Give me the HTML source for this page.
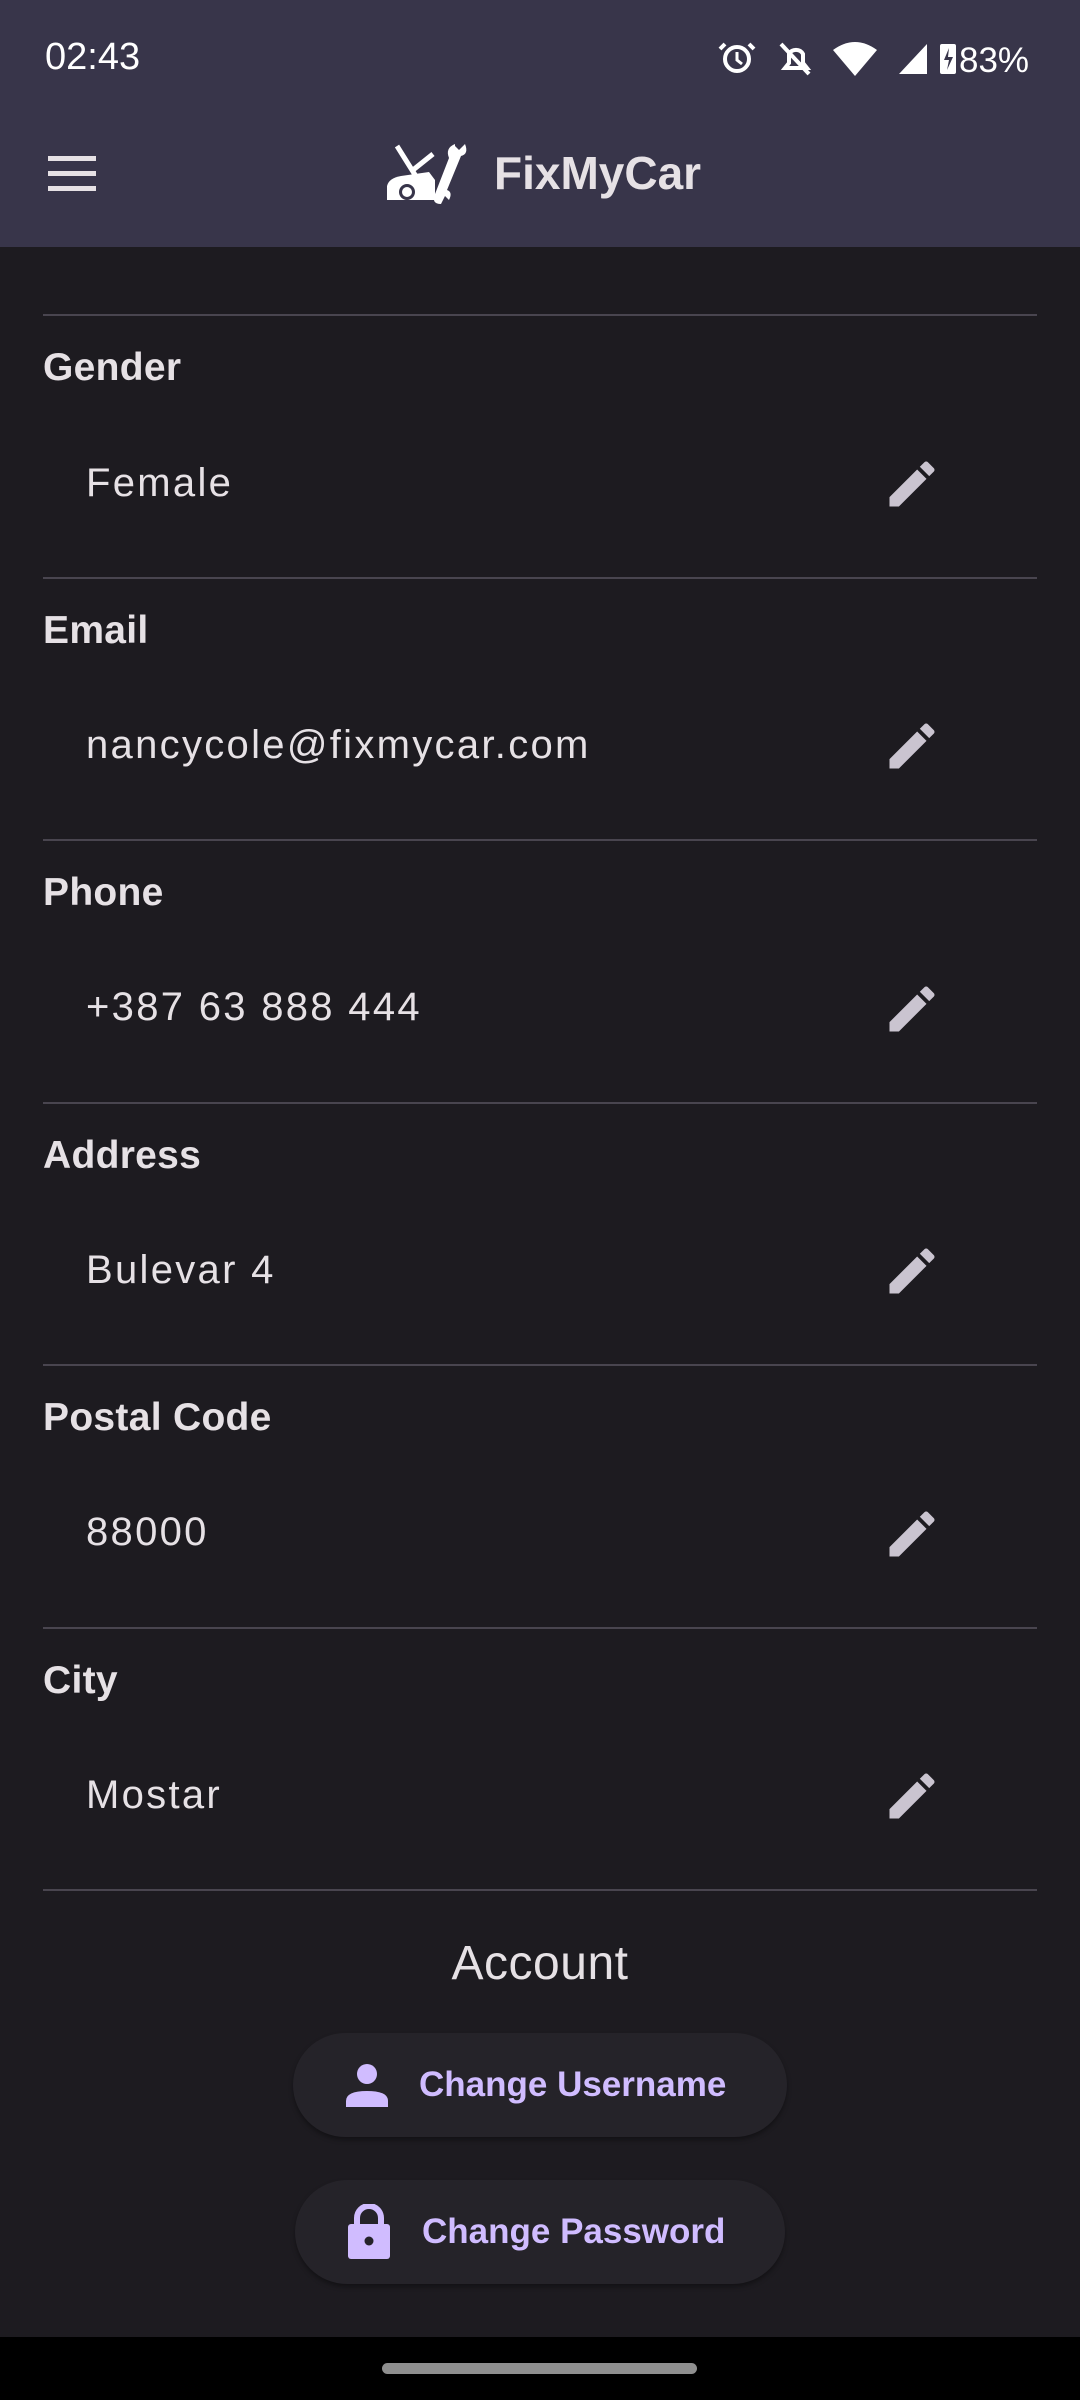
<!DOCTYPE html>
<html><head><meta charset="utf-8"><style>
*{margin:0;padding:0;box-sizing:border-box}
body{width:1080px;height:2400px;background:#1d1b20;font-family:"Liberation Sans",sans-serif;color:#e6e1e5;position:relative;overflow:hidden}
.hdr{position:absolute;left:0;top:0;width:1080px;height:247px;background:#38354a}
.abs{position:absolute}
.div{position:absolute;left:43px;width:994px;height:2px;background:#49454f}
.lab{position:absolute;left:43px;font-size:39px;font-weight:bold;color:#e6e1e5;letter-spacing:0.3px}
.val{position:absolute;left:86px;font-size:40px;color:#e6e1e5;letter-spacing:2.3px}
.pen{position:absolute;left:882px;width:60px;height:60px}
.btn{position:absolute;background:#252329;border-radius:52px;box-shadow:0 3px 5px rgba(0,0,0,.35);color:#d0bcff;font-size:35px;font-weight:bold}
</style></head><body>
<div class="hdr"></div>
<div class="abs" style="left:45px;top:36px;font-size:38px;color:#fff">02:43</div>
<svg class="abs" style="left:715px;top:38px" width="320" height="40" viewBox="0 0 320 40">
 <circle cx="22" cy="21" r="12" fill="none" stroke="#fff" stroke-width="4"/><path d="M22 14v8l5 4" stroke="#fff" stroke-width="3" fill="none"/><path d="M10 6l-5 5M34 6l5 5" stroke="#fff" stroke-width="4"/>
 <path d="M70 30h22l-4-5v-9a8 8 0 0 0-14 0v9z" fill="none" stroke="#fff" stroke-width="4"/><path d="M66 6l28 30" stroke="#fff" stroke-width="4"/>
 <path d="M118 12q22-16 44 0l-22 26z" fill="#fff"/>
 <path d="M184 36l28-30v30z" fill="#fff"/>
 <rect x="225" y="6" width="16" height="30" rx="2" fill="#fff"/><path d="M234 10l-5 12h5l-2 10 6-13h-5z" fill="#38354a"/>
 <text x="244" y="34" font-size="35" fill="#fff" font-family="Liberation Sans">83%</text>
</svg>
<svg class="abs" style="left:48px;top:156px" width="50" height="36"><rect y="0" width="48" height="5" fill="#e6e1e5"/><rect y="15" width="48" height="5" fill="#e6e1e5"/><rect y="30" width="48" height="5" fill="#e6e1e5"/></svg>
<svg class="abs" style="left:385px;top:140px" width="90" height="66" viewBox="0 0 90 66">
 <path d="M12 6l20 32M28 30l20-16" stroke="#fff" stroke-width="5"/>
 <path d="M2 60v-14q2-8 14-10l28-4 6 8v20z" fill="#fff"/><circle cx="22" cy="52" r="8" fill="#38354a"/><circle cx="22" cy="52" r="5" fill="#fff"/>
 <path d="M70 4q-10 4-6 14l-14 36q-4 10 6 10l4-8 4 4q4-8-2-10l14-34q8-2 4-12l-6 6-4-4z" fill="#fff"/>
</svg>
<div class="abs" style="left:494px;top:146px;font-size:46px;font-weight:bold;color:#e6e1e5">FixMyCar</div>

<div class="div" style="top:314px"></div>
<div class="lab" style="top:346px">Gender</div><div class="val" style="top:461px">Female</div>
<div class="div" style="top:577px"></div>
<div class="lab" style="top:609px">Email</div><div class="val" style="top:723px">nancycole@fixmycar.com</div>
<div class="div" style="top:839px"></div>
<div class="lab" style="top:871px">Phone</div><div class="val" style="top:985px">+387 63 888 444</div>
<div class="div" style="top:1102px"></div>
<div class="lab" style="top:1134px">Address</div><div class="val" style="top:1248px">Bulevar 4</div>
<div class="div" style="top:1364px"></div>
<div class="lab" style="top:1396px">Postal Code</div><div class="val" style="top:1510px">88000</div>
<div class="div" style="top:1627px"></div>
<div class="lab" style="top:1659px">City</div><div class="val" style="top:1773px">Mostar</div>
<div class="div" style="top:1889px"></div>

<svg width="0" height="0" style="position:absolute"><defs><path id="p" d="M3 17.25V21h3.75L17.81 9.94l-3.75-3.75L3 17.25zM20.71 7.04a1 1 0 0 0 0-1.41l-2.34-2.34a1 1 0 0 0-1.41 0l-1.83 1.83 3.75 3.75 1.83-1.83z" fill="#cac4d0"/></defs></svg>
<svg class="pen" style="top:454px" viewBox="0 0 24 24"><use href="#p"/></svg>
<svg class="pen" style="top:716px" viewBox="0 0 24 24"><use href="#p"/></svg>
<svg class="pen" style="top:979px" viewBox="0 0 24 24"><use href="#p"/></svg>
<svg class="pen" style="top:1241px" viewBox="0 0 24 24"><use href="#p"/></svg>
<svg class="pen" style="top:1504px" viewBox="0 0 24 24"><use href="#p"/></svg>
<svg class="pen" style="top:1766px" viewBox="0 0 24 24"><use href="#p"/></svg>

<div class="abs" style="left:0;width:1080px;top:1936px;text-align:center;font-size:48px;color:#e6e1e5;letter-spacing:0.5px">Account</div>
<div class="btn" style="left:293px;top:2033px;width:494px;height:104px">
 <svg class="abs" style="left:52px;top:30px" width="44" height="44" viewBox="0 0 44 44"><circle cx="22" cy="11" r="10" fill="#d0bcff"/><path d="M1 44v-6q0-10 21-10t21 10v6z" fill="#d0bcff"/></svg>
 <div class="abs" style="left:126px;top:32px">Change Username</div>
</div>
<div class="btn" style="left:295px;top:2180px;width:490px;height:104px">
 <svg class="abs" style="left:52px;top:24px" width="44" height="56" viewBox="0 0 44 56"><path d="M10 22v-8a12 12 0 0 1 24 0v8" fill="none" stroke="#d0bcff" stroke-width="6"/><rect x="1" y="20" width="42" height="35" rx="3" fill="#d0bcff"/><circle cx="22" cy="37" r="4.5" fill="#252329"/></svg>
 <div class="abs" style="left:127px;top:32px">Change Password</div>
</div>
<div class="abs" style="left:0;top:2337px;width:1080px;height:63px;background:#000"></div>
<div class="abs" style="left:382px;top:2363px;width:315px;height:11px;border-radius:6px;background:#8f8f8f"></div>
</body></html>
